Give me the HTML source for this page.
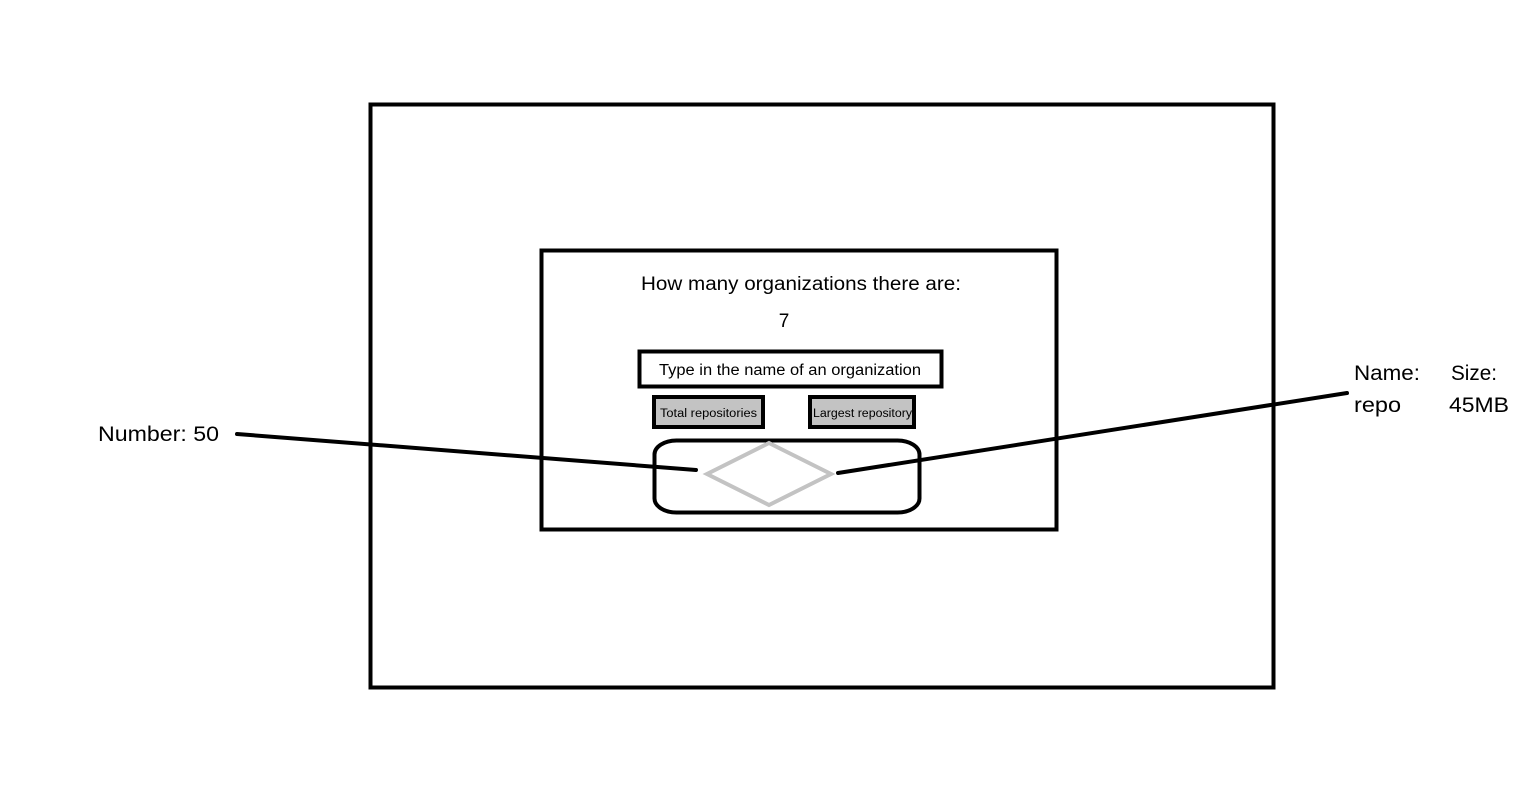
<!DOCTYPE html>
<html><head><meta charset="utf-8"><style>
html,body{margin:0;padding:0;background:#fff;}
svg{display:block;}
text{font-family:"Liberation Sans",sans-serif;fill:#000;}
</style></head><body>
<svg width="1514" height="810" viewBox="0 0 1514 810" xmlns="http://www.w3.org/2000/svg">
<rect x="0" y="0" width="1514" height="810" fill="#fff"/>
<rect x="370.5" y="104.5" width="903" height="583" fill="none" stroke="#000" stroke-width="4"/>
<rect x="541.5" y="250.5" width="515" height="279" fill="none" stroke="#000" stroke-width="4"/>
<text x="641" y="290" font-size="19" textLength="320" lengthAdjust="spacingAndGlyphs">How many organizations there are:</text>
<text x="784" y="327" font-size="19" text-anchor="middle">7</text>
<rect x="639.5" y="351.5" width="302" height="35" fill="#fff" stroke="#000" stroke-width="4"/>
<text x="659" y="375" font-size="15.5" textLength="262" lengthAdjust="spacingAndGlyphs">Type in the name of an organization</text>
<rect x="654" y="397" width="109" height="30" fill="#c3c3c3" stroke="#000" stroke-width="4"/>
<text x="660" y="417" font-size="11.5" textLength="97" lengthAdjust="spacingAndGlyphs">Total repositories</text>
<rect x="810" y="397" width="104" height="30" fill="#c3c3c3" stroke="#000" stroke-width="4"/>
<text x="813" y="417" font-size="11.5" textLength="99" lengthAdjust="spacingAndGlyphs">Largest repository</text>
<rect x="654.5" y="440.5" width="265" height="72" rx="22" ry="14" fill="none" stroke="#000" stroke-width="4"/>
<polygon points="769,443 831,474 769,505 707,474" fill="none" stroke="#c3c3c3" stroke-width="4"/>
<line x1="237" y1="434" x2="696" y2="470" stroke="#000" stroke-width="4" stroke-linecap="round"/>
<line x1="838" y1="473" x2="1347" y2="393" stroke="#000" stroke-width="4" stroke-linecap="round"/>
<text x="98" y="441" font-size="21" textLength="121" lengthAdjust="spacingAndGlyphs">Number: 50</text>
<text x="1354" y="380" font-size="21" textLength="66" lengthAdjust="spacingAndGlyphs">Name:</text>
<text x="1451" y="380" font-size="21" textLength="46" lengthAdjust="spacingAndGlyphs">Size:</text>
<text x="1354" y="412" font-size="21" textLength="47" lengthAdjust="spacingAndGlyphs">repo</text>
<text x="1449" y="412" font-size="21" textLength="60" lengthAdjust="spacingAndGlyphs">45MB</text>
</svg>
</body></html>
